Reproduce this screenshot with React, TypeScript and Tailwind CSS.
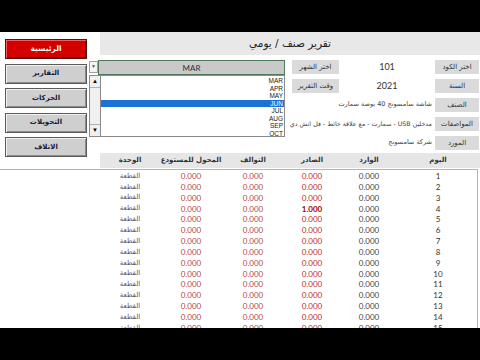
const months = ['MAR', 'APR', 'MAY', 'JUN', 'JUL', 'AUG', 'SEP', 'OCT']
const navButtons = ['التقارير', 'الحركات', 'التحويلات', 'الاتلاف']
const days = Array.from({ length: 16 }, (_, i) => i + 1)

const ar = { fontFamily: '"DejaVu Sans", sans-serif' }
const num = { fontFamily: 'Lato, "DejaVu Sans", sans-serif' }

function Label({ text, className = '' }: { text: string; className?: string }) {
  return (
    <div dir="rtl" className={`h-[14px] bg-[#dadada] flex items-center justify-center text-[7px] text-[#333] whitespace-nowrap ${className}`} style={ar}>
      {text}
    </div>
  )
}

export default function App() {
  return (
    <div className="w-[480px] h-[360px] bg-black flex flex-col">
      <div className="h-[32px]" />
      <div className="h-[296px] bg-white overflow-hidden">
        {/* top block */}
        <div className="flex h-[137px]">
          <div className="w-[88px] pt-[7px] pl-[5px] flex flex-col gap-[4.5px]">
            <button dir="rtl" className="w-[82px] h-[20px] bg-[#d40000] border border-[#5a1010] shadow-[inset_1px_1px_0_#f06060,inset_-1px_-1px_0_#8a0000] text-white text-[7.5px] font-bold" style={ar}>
              الرئيسية
            </button>
            {navButtons.map((b) => (
              <button key={b} dir="rtl" className="w-[82px] h-[20px] bg-[#cfcfcf] border border-[#5a5a5a] shadow-[inset_1px_1px_0_#f2f2f2,inset_-1px_-1px_0_#8c8c8c] text-[#1a1a40] text-[7px] font-bold" style={ar}>
                {b}
              </button>
            ))}
          </div>

          <div className="flex-1 flex flex-col">
            <div className="ml-[12px] h-[23px] bg-[#e8e8e8] flex items-center justify-center">
              <span dir="rtl" className="text-[10.5px] text-[#222]" style={ar}>تقرير صنف / يومي</span>
            </div>

            <div className="flex mt-[5px] h-[90px]">
              {/* month combobox */}
              <div className="w-[197px] flex flex-col">
                <div className="flex h-[15px]">
                  <div className="mt-[1px] ml-[1px] w-[9px] h-[12px] bg-[#f4f4f4] border border-[#a0a0a0] flex items-center justify-center text-[5px] text-[#555]">▼</div>
                  <div className="flex-1 h-[15px] bg-[#c9c9c9] border border-[#4f7a5c] flex items-center justify-center text-[8px] text-[#333]" style={num}>MAR</div>
                </div>
                <div className="flex h-[62px]">
                  <div className="ml-[1px] w-[12px] h-[62px] bg-[#f0f0f0] border border-[#8a8a8a] flex flex-col justify-between">
                    <div className="h-[12px] border-b border-[#b0b0b0] flex items-center justify-center text-[6px] text-black">▲</div>
                    <div className="h-[12px] border-t border-[#b0b0b0] flex items-center justify-center text-[6px] text-black">▼</div>
                  </div>
                  <div className="flex-1 h-[62px] bg-white border border-[#8a8a8a] border-l-0 py-[1px]">
                    {months.map((m) => (
                      <div
                        key={m}
                        className={`h-[7.5px] leading-[7.5px] text-right pr-[1px] text-[6.5px] ${m === 'JUN' ? 'bg-[#1a72d6] text-white' : 'text-[#222]'}`}
                        style={{ fontFamily: '"Liberation Sans", sans-serif' }}
                      >
                        {m}
                      </div>
                    ))}
                  </div>
                </div>
              </div>

              {/* item details */}
              <div className="ml-[7px] w-[187px] flex flex-col gap-[5px]">
                <div className="flex h-[14px]">
                  <Label text="اختر الشهر" className="w-[47px]" />
                  <div className="w-[96px] flex items-center justify-center text-[9px] text-[#333]" style={num}>101</div>
                  <Label text="اختر الكود" className="w-[44px]" />
                </div>
                <div className="flex h-[14px]">
                  <Label text="وقت التقرير" className="w-[47px]" />
                  <div className="w-[96px] flex items-center justify-center text-[9px] text-[#333]" style={num}>2021</div>
                  <Label text="السنة" className="w-[44px]" />
                </div>
                <div className="flex h-[14px]">
                  <div dir="rtl" className="w-[143px] pr-[3px] flex items-center text-[6.5px] text-[#444] whitespace-nowrap" style={ar}>شاشة سامسونج 40 بوصة سمارت</div>
                  <Label text="الصنف" className="w-[44px]" />
                </div>
                <div className="flex h-[14px]">
                  <div dir="rtl" className="w-[143px] pr-[3px] flex items-center text-[6.3px] text-[#444] whitespace-nowrap" style={ar}>مدخلين USB - سمارت - مع علاقة حائط - فل اتش دي</div>
                  <Label text="المواصفات" className="w-[44px]" />
                </div>
                <div className="flex h-[14px]">
                  <div dir="rtl" className="w-[143px] pr-[3px] flex items-center text-[6.5px] text-[#444] whitespace-nowrap" style={ar}>شركة سامسونج</div>
                  <Label text="المورد" className="w-[44px]" />
                </div>
              </div>
            </div>

            {/* table header */}
            <div dir="ltr" className="mt-[3px] ml-[12px] h-[15px] bg-[#e6e6e6] grid grid-cols-[60px_62px_62px_56px_58px_80px] items-center text-[7px] font-bold text-[#333] whitespace-nowrap" style={ar}>
              <span className="text-center">الوحدة</span>
              <span dir="rtl" className="text-center">المحول للمستودع</span>
              <span className="text-center">التوالف</span>
              <span className="text-center">الصادر</span>
              <span className="text-center">الوارد</span>
              <span className="text-center">اليوم</span>
            </div>
          </div>
        </div>

        {/* rows */}
        <div className="w-[478px] border-t border-r border-[#b4b4b4]">
          {days.map((d) => (
            <div key={d} className="h-[10.85px] grid grid-cols-[100px_60px_62px_62px_56px_58px_80px] items-center text-[8px]" style={num}>
              <span />
              <span className="text-center text-[7px] text-[#55556a]" style={ar}>القطعة</span>
              <span className="text-center text-[#b84848]">0.000</span>
              <span className="text-center text-[#b84848]">0.000</span>
              <span className={`text-center ${d === 4 ? 'text-[#a00000] font-bold' : 'text-[#c62828]'}`}>{d === 4 ? '1.000' : '0.000'}</span>
              <span className="text-center text-[#444]">0.000</span>
              <span className="text-center text-[#333]">{d}</span>
            </div>
          ))}
        </div>
      </div>
      <div className="h-[32px]" />
    </div>
  )
}
